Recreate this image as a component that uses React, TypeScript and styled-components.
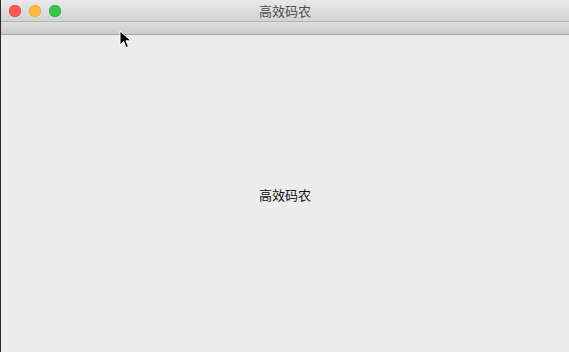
import React from "react";
import styled, { createGlobalStyle } from "styled-components";

const Global = createGlobalStyle`
  html, body {
    margin: 0;
    padding: 0;
    background: #ececec;
  }
  body {
    font-family: "Liberation Sans", "Noto Sans CJK SC", sans-serif;
  }
`;

const Window = styled.div`
  position: relative;
  width: 569px;
  height: 352px;
  display: flex;
  flex-direction: column;
  background: #ececec;
  border-left: 1px solid #2a2a2a;
  box-sizing: border-box;
  overflow: hidden;
`;

const TitleBar = styled.div`
  position: relative;
  height: 22px;
  display: flex;
  align-items: center;
  justify-content: center;
  background: linear-gradient(#e8e8e8, #d3d3d3);
  border-bottom: 1px solid #b4b4b4;
  box-sizing: border-box;
  border-top-left-radius: 5px;
`;

const Lights = styled.div`
  position: absolute;
  left: 8px;
  top: 5px;
  display: flex;
  gap: 8px;
`;

const Light = styled.span<{ $fill: string; $edge: string }>`
  width: 12px;
  height: 12px;
  border-radius: 50%;
  background: ${p => p.$fill};
  box-shadow: inset 0 0 0 0.5px ${p => p.$edge};
`;

const Title = styled.span`
  font-size: 13px;
  color: #4d4d4d;
`;

const ToolStrip = styled.div`
  height: 12px;
  background: linear-gradient(#dedede, #cacaca);
  border-bottom: 1px solid #a9a9a9;
`;

const Content = styled.div`
  flex: 1;
  display: flex;
  align-items: center;
  justify-content: center;
  padding-top: 1px;
`;

const Label = styled.span`
  font-size: 13px;
  color: #111;
`;

const Cursor = styled.svg`
  position: absolute;
  left: 118px;
  top: 30px;
`;

export default function App() {
  return (
    <>
      <Global />
      <Window>
        <TitleBar>
          <Lights>
            <Light $fill="#fc5753" $edge="#df3d39" />
            <Light $fill="#fdbc40" $edge="#de9f34" />
            <Light $fill="#33c748" $edge="#27aa35" />
          </Lights>
          <Title>高效码农</Title>
        </TitleBar>
        <ToolStrip />
        <Content>
          <Label>高效码农</Label>
        </Content>
        <Cursor width="14" height="20" viewBox="0 0 14 20">
          <path
            d="M1 1 L1 15 L4.5 11.5 L7 17.5 L9.5 16.5 L7 10.8 L12 10.8 Z"
            fill="#000"
            stroke="#fff"
            strokeWidth="1"
            strokeLinejoin="round"
          />
        </Cursor>
      </Window>
    </>
  );
}
